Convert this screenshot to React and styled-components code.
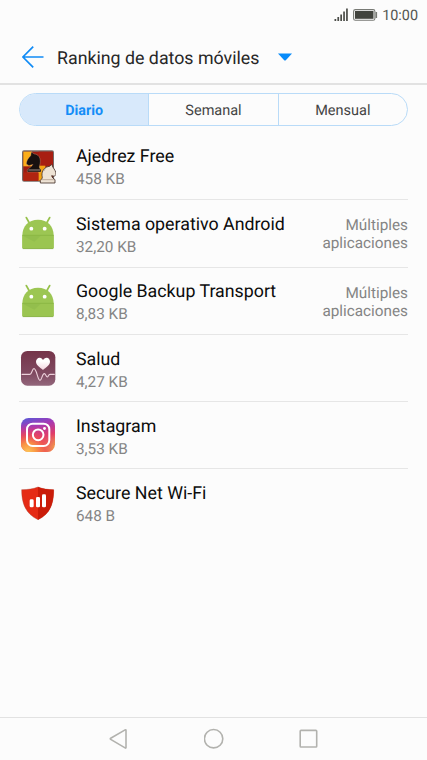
import React from 'react'
import styled, { createGlobalStyle } from 'styled-components'

const ChessIcon = () => (
  <AppIcon viewBox="30 25 108 108">
    <rect x="36" y="32" width="96" height="94" rx="6" fill="#4a3a35" opacity="0.75" />
    <rect x="40" y="36" width="89" height="87" rx="3" fill="#9e1c10" />
    <path d="M40 36h26v44H40z" fill="#fbae1a" />
    <path d="M86 36h43v42H86z" fill="#a81e12" />
    <path d="M84 78h22v45H84z" fill="#f4a414" />
    <path d="M40 98h46v25H40z" fill="#b02410" />
    <path
      d="M52 97v-7c4-4 14-9 17-16l-12 4-8-5c0-9 5-17 13-25l2-11 9 6c12 1 18 10 18 23 0 9-5 15-2 20l4 4v7z"
      fill="#17100f" stroke="#e3b48f" strokeWidth="1"
    />
    <path d="M55 91h35" stroke="#d9c5ba" strokeWidth="2.2" />
    <path
      d="M135 130v-10c-4-3-9-6-10-12l8 2 5-6c0-9-5-15-9-21l-4-9-6 6c-14 1-21 10-23 22-1 7 3 12-1 16l-4 4v8z"
      fill="#eee3d5" stroke="#453029" strokeWidth="2.5"
    />
    <path d="M93 120h40M103 93c1-6 4-9 9-11" stroke="#9a8172" strokeWidth="1.7" fill="none" />
  </AppIcon>
)

const AndroidIcon = () => (
  <AppIcon viewBox="30 31 108 108">
    <path d="M49 39l8 14M119 39l-8 14" stroke="#97c14b" strokeWidth="5.5" strokeLinecap="round" />
    <path d="M37 92c0-27 18-47 47-47s47 20 47 47v36q0 5-5 5H42q-5 0-5-5z" fill="#9cc653" />
    <path d="M37 92h94v36q0 5-5 5H42q-5 0-5-5z" fill="#9bc551" />
    <path d="M38 93h54l-19 18z" fill="#93be4d" />
    <path d="M37 92h94" stroke="#84b040" strokeWidth="2" />
    <path d="M38 132h92" stroke="#82a84a" strokeWidth="1.5" />
    <circle cx="64" cy="72" r="5.8" fill="#fff" />
    <circle cx="104" cy="72" r="5.8" fill="#fff" />
  </AppIcon>
)

const HealthIcon = () => (
  <AppIcon viewBox="30 30 108 108">
    <defs>
      <linearGradient id="health" x1="0" y1="0" x2="0" y2="1">
        <stop offset="0" stopColor="#753449" />
        <stop offset="0.65" stopColor="#804a61" />
        <stop offset="1" stopColor="#92667b" />
      </linearGradient>
      <linearGradient id="heart" x1="0" y1="0" x2="0" y2="1">
        <stop offset="0.3" stopColor="#fff" />
        <stop offset="1" stopColor="#f2d5df" />
      </linearGradient>
    </defs>
    <rect x="33" y="33" width="103" height="104" rx="19" fill="url(#health)" />
    <path
      d="M99 90C91 82 78 76 78 65c0-7 5-12 11-12 5 0 8 3 10 7 2-4 6-7 11-7 6 0 10 5 10 12 0 11-13 17-21 25z"
      fill="url(#heart)"
    />
    <path
      d="M36 103h24c6 0 6-17 12-17 8 0 11 35 18 35 6 0 6-20 13-20 4 0 5 10 9 10 3 0 3-8 8-8h13"
      stroke="#ecd0da" strokeWidth="3.3" fill="none" strokeLinecap="round"
    />
  </AppIcon>
)

const InstagramIcon = () => (
  <AppIcon viewBox="30 37 108 108">
    <defs>
      <linearGradient id="igBase" x1="0.1" y1="0" x2="0.4" y2="1">
        <stop offset="0" stopColor="#5a58d6" />
        <stop offset="0.3" stopColor="#a339b7" />
        <stop offset="0.65" stopColor="#e13c68" />
        <stop offset="1" stopColor="#f5a045" />
      </linearGradient>
      <radialGradient id="igGlow" cx="0.2" cy="1" r="0.85">
        <stop offset="0" stopColor="#fdc556" />
        <stop offset="0.3" stopColor="#f99344" />
        <stop offset="0.6" stopColor="#ee4c54" stopOpacity="0.75" />
        <stop offset="1" stopColor="#d6338a" stopOpacity="0" />
      </radialGradient>
    </defs>
    <rect x="33" y="40" width="102" height="102" rx="23" fill="url(#igBase)" />
    <rect x="33" y="40" width="102" height="102" rx="23" fill="url(#igGlow)" />
    <rect x="51" y="57" width="67" height="67" rx="17" fill="none" stroke="#fff" strokeWidth="6" />
    <circle cx="84.5" cy="90.5" r="16" fill="none" stroke="#fff" strokeWidth="6" />
    <circle cx="103.5" cy="71.5" r="4.3" fill="#fff" />
  </AppIcon>
)

const ShieldIcon = () => (
  <AppIcon viewBox="30 29 108 108">
    <path d="M84 35c-15 6-30 8-49 8 0 38 10 72 49 90 39-18 47-52 47-90-19 0-32-2-47-8z" fill="#e52b15" stroke="#a8402f" strokeWidth="1.2" />
    <path d="M84 35c15 6 28 8 47 8 0 38-8 72-47 90z" fill="#ca1c09" />
    <rect x="59" y="72" width="12" height="24" rx="4" fill="#fff" />
    <rect x="78" y="65" width="12" height="31" rx="4" fill="#fff" />
    <rect x="96" y="57" width="12" height="39" rx="4" fill="#fff" />
  </AppIcon>
)

const tabs = ['Diario', 'Semanal', 'Mensual']

const apps = [
  { name: 'Ajedrez Free', usage: '458 KB', Icon: ChessIcon },
  { name: 'Sistema operativo Android', usage: '32,20 KB', Icon: AndroidIcon, multiple: true },
  { name: 'Google Backup Transport', usage: '8,83 KB', Icon: AndroidIcon, multiple: true },
  { name: 'Salud', usage: '4,27 KB', Icon: HealthIcon },
  { name: 'Instagram', usage: '3,53 KB', Icon: InstagramIcon },
  { name: 'Secure Net Wi-Fi', usage: '648 B', Icon: ShieldIcon },
]

const App = () => {
  return (
    <Screen>
      <GlobalStyle />
      <StatusBar>
        <svg width="15" height="14" viewBox="0 0 15 14" fill="#4b4d48">
          <path d="M0.5 11h1.7v2H.5zM3.4 9h1.7v4H3.4zM6.3 6.5H8V13H6.3zM9.2 3.5h1.7V13H9.2zM12.1.5h1.7V13h-1.7z" />
        </svg>
        <svg width="25" height="12" viewBox="0 0 25 12">
          <rect x="0.6" y="0.6" width="21.3" height="10.6" rx="1.8" fill="none" stroke="#787a75" strokeWidth="1.1" />
          <rect x="2" y="2" width="18.5" height="7.8" fill="#42443e" />
          <path d="M23.3 3v6" stroke="#787a75" strokeWidth="1.6" />
        </svg>
        <Clock>10:00</Clock>
      </StatusBar>
      <Header>
        <svg width="22" height="22" viewBox="0 0 22 22">
          <path d="M11.2.7L.9 11l10.3 10.3M.9 11h20.6" fill="none" stroke="#118bf5" strokeWidth="1.7" />
        </svg>
        <Title>Ranking de datos móviles</Title>
        <svg width="14" height="8" viewBox="0 0 14 8">
          <path d="M0 .4h14L7.8 7.2q-.8.7-1.6 0z" fill="#078bfa" />
        </svg>
      </Header>
      <Tabs>
        {tabs.map((tab, i) => (
          <Tab key={tab} $active={i === 0}>{tab}</Tab>
        ))}
      </Tabs>
      <List>
        {apps.map(({ name, usage, Icon, multiple }) => (
          <Row key={name}>
            <Icon />
            <Info>
              <Name>{name}</Name>
              <Usage>{usage}</Usage>
            </Info>
            {multiple && <Note>Múltiples aplicaciones</Note>}
          </Row>
        ))}
      </List>
      <NavBar>
        <svg width="20" height="22" viewBox="0 0 20 22">
          <path d="M17 2.3v17.2q0 .9-.9.4L1.7 11.4q-.8-.6 0-1.1L16.1 1.9q.9-.5.9.4z" />
        </svg>
        <svg width="20" height="22" viewBox="0 0 20 22">
          <circle cx="9.6" cy="10.7" r="9.2" />
        </svg>
        <svg width="20" height="22" viewBox="0 0 20 22">
          <rect x="1.2" y="2.4" width="16.5" height="16.6" rx="0.8" />
        </svg>
      </NavBar>
    </Screen>
  )
}

export default App

const GlobalStyle = createGlobalStyle`
  body {
    margin: 0;
    background-color: #fcfcfc;
    font-family: Roboto, sans-serif;
    text-rendering: geometricPrecision;
  }
  svg {
    display: block;
    flex-shrink: 0;
  }
`
const Screen = styled.div`
  width: 427px;
  height: 760px;
  display: flex;
  flex-direction: column;
  overflow: hidden;
  background-color: #fcfcfc;
`
const StatusBar = styled.div`
  height: 30px;
  box-sizing: border-box;
  padding: 0 9px 0 0;
  display: flex;
  justify-content: flex-end;
  align-items: center;
  gap: 4px;

  svg {
    margin-bottom: 1px;
  }
`
const Clock = styled.div`
  color: #555752;
  font-size: 14.4px;
`
const Header = styled.div`
  height: 55px;
  box-sizing: border-box;
  padding: 0 22px;
  border-bottom: 2px solid #e2e2e2;
  display: flex;
  align-items: center;
`
const Title = styled.div`
  margin: 0 19px 0 13px;
  padding-top: 3px;
  color: #272727;
  font-size: 17.8px;
  white-space: nowrap;
`
const Tabs = styled.div`
  height: 33px;
  margin: 8px 19px 0;
  box-sizing: border-box;
  border: 1px solid #b9dbf8;
  border-radius: 17px;
  display: flex;
  flex-shrink: 0;
  overflow: hidden;
`
const Tab = styled.div`
  flex: 1;
  padding-top: 2px;
  display: flex;
  align-items: center;
  justify-content: center;
  font-size: ${({ $active }) => ($active ? '14.3px' : '14.5px')};
  font-weight: ${({ $active }) => ($active ? 700 : 400)};
  color: ${({ $active }) => ($active ? '#148df7' : '#454545')};
  background-color: ${({ $active }) => ($active ? '#d8e9fb' : 'transparent')};

  & + & {
    border-left: 1px solid #b9dbf8;
  }
`
const List = styled.div`
  flex: 1;
  padding: 6px 19px 0;
`
const Row = styled.div`
  height: 67.3px;
  box-sizing: border-box;
  padding-left: 1px;
  display: flex;
  align-items: center;

  & + & {
    border-top: 1px solid #e6e6e6;
  }
`
const AppIcon = styled.svg`
  width: 36px;
  height: 36px;
`
const Info = styled.div`
  flex: 1;
  margin-left: 20px;
  padding-top: 4px;
  white-space: nowrap;
`
const Name = styled.div`
  color: #0c0c0c;
  font-size: 17.8px;
  line-height: 24px;
`
const Usage = styled.div`
  color: #858585;
  font-size: 15.3px;
  line-height: 21px;
`
const Note = styled.div`
  width: 90px;
  padding-top: 2px;
  color: #858585;
  font-size: 15.3px;
  line-height: 18px;
  text-align: right;
`
const NavBar = styled.div`
  height: 43px;
  box-sizing: border-box;
  border-top: 1px solid #e2e2e2;
  display: flex;
  align-items: center;
  justify-content: center;
  gap: 75px;

  svg {
    fill: none;
    stroke: #b2b2ae;
    stroke-width: 1.6;
  }
`
